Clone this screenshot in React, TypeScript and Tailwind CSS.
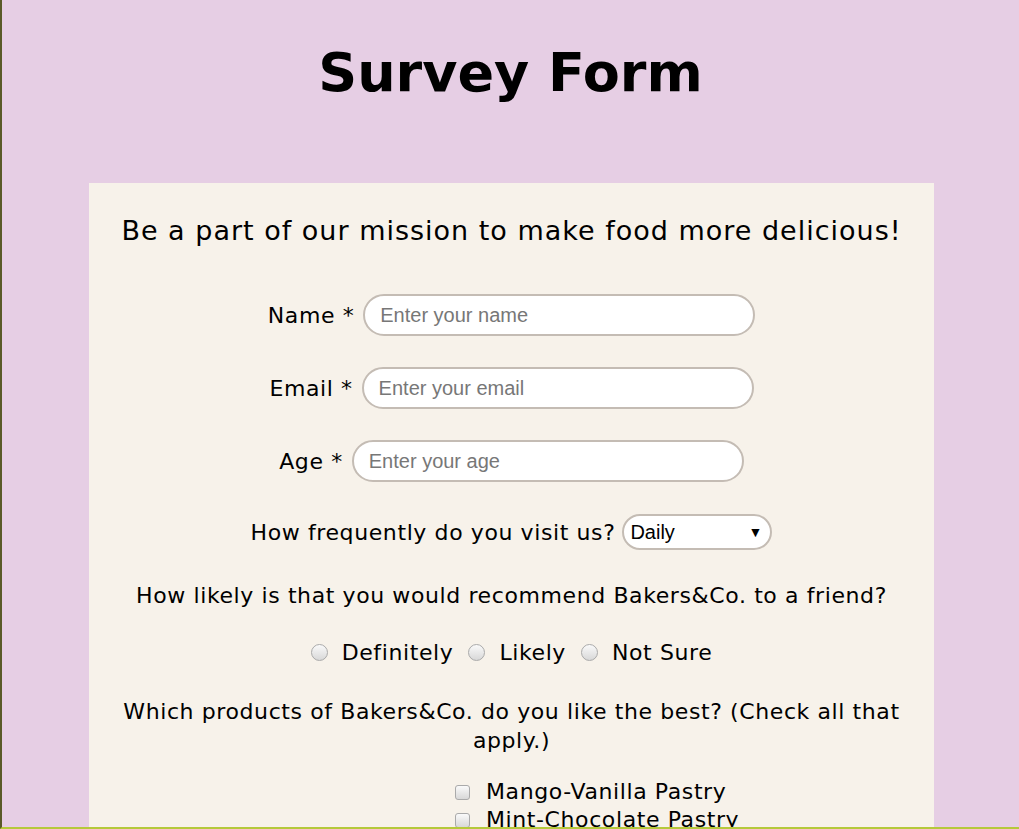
export default function App() {
  const label = "text-[22px] text-black tracking-[0.6px]";
  const input =
    "w-[392px] h-[42px] rounded-full border-2 border-[#c4bcb4] bg-white px-[15px] text-[20px] text-black placeholder:text-[#777] outline-none font-['Liberation_Sans',Arial,sans-serif]";

  return (
    <div className="min-h-[829px] h-[829px] overflow-hidden bg-[#e6cee4] border-l-2 border-[#5a5a28] border-b-2 border-b-[#b5c93a] font-['DejaVu_Sans',sans-serif]">
      <h1 className="text-center text-[54px] font-bold text-black pt-[38px] leading-[70px]">
        Survey Form
      </h1>
      <div className="mx-[87px] w-[845px] mt-[75px] bg-[#f7f2ea] pt-[22px] pb-10 flex flex-col items-center">
        <p className="text-[27px] leading-[52px] text-black tracking-[1px]">
          Be a part of our mission to make food more delicious!
        </p>

        <div className="mt-[37px] flex flex-col items-center gap-[31px]">
          <div className="flex items-center gap-[9px]">
            <label className={label}>Name *</label>
            <input className={input} placeholder="Enter your name" />
          </div>
          <div className="flex items-center gap-[9px]">
            <label className={label}>Email *</label>
            <input className={input} placeholder="Enter your email" />
          </div>
          <div className="flex items-center gap-[9px]">
            <label className={label}>Age *</label>
            <input className={input} placeholder="Enter your age" />
          </div>
        </div>

        <div className="mt-[32px] flex items-center gap-[7px]">
          <span className={label}>How frequently do you visit us?</span>
          <div className="relative w-[150px] h-[36px] rounded-full border-2 border-[#c4bcb4] bg-white flex items-center px-[6px] font-['Liberation_Sans',Arial,sans-serif] text-[20px]">
            Daily
            <span className="absolute right-[8px] text-[14px]">▼</span>
          </div>
        </div>

        <p className={`${label} mt-[29px]`}>
          How likely is that you would recommend Bakers&amp;Co. to a friend?
        </p>

        <div className="mt-[24px] flex items-center gap-[15px] text-[22px] tracking-[0.6px]">
          {["Definitely", "Likely", "Not Sure"].map((o) => (
            <label key={o} className="flex items-center gap-[14px]">
              <span className="w-[17px] h-[17px] rounded-full border border-[#aaa] bg-gradient-to-b from-[#fafafa] to-[#d8d8d8]" />
              {o}
            </label>
          ))}
        </div>

        <p className={`${label} mt-[28px] text-center leading-[29px] w-[800px]`}>
          Which products of Bakers&amp;Co. do you like the best? (Check all that apply.)
        </p>

        <div className="mt-[23px] flex flex-col self-start ml-[366px] text-[22px] leading-[28px] tracking-[0.6px]">
          {["Mango-Vanilla Pastry", "Mint-Chocolate Pastry"].map((o) => (
            <label key={o} className="flex items-center gap-[16px]">
              <span className="w-[15px] h-[15px] rounded-[3px] border border-[#aaa] bg-gradient-to-b from-[#fafafa] to-[#d8d8d8]" />
              {o}
            </label>
          ))}
        </div>
      </div>
    </div>
  );
}
